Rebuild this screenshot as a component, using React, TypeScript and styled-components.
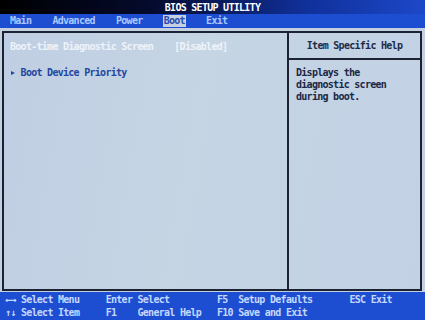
import React from "react";
import styled, { createGlobalStyle } from "styled-components";

const CH = 5.3;

const Global = createGlobalStyle`
  html, body { margin: 0; padding: 0; background: #c4d0de; }
  body { width: 425px; height: 320px; overflow: hidden; }
`;

const Screen = styled.div`
  width: 425px;
  height: 320px;
  display: flex;
  flex-direction: column;
  font-family: "DejaVu Sans Mono", "Liberation Mono", monospace;
  font-size: 10px;
  letter-spacing: -0.72px;
  font-weight: 700;
`;

const TitleBar = styled.div`
  flex: none;
  height: 14px;
  box-sizing: border-box;
  padding-top: 2px;
  line-height: 12px;
  text-align: center;
  color: #ffffff;
  background: linear-gradient(to right, #000000 0%, #040a2c 35%, #10309a 72%, #1c48c8 100%);
`;

const MenuBar = styled.div`
  flex: none;
  height: 14px;
  display: flex;
  align-items: center;
  gap: ${CH * 4}px;
  padding-left: 10px;
  background: #1d4ed2;
`;

const MenuItem = styled.span<{ $active?: boolean }>`
  line-height: 12px;
  color: ${(p) => (p.$active ? "#2a4cb0" : "#a9c8ff")};
  background: ${(p) => (p.$active ? "#c6d0e2" : "transparent")};
  padding: 0 1px;
  margin: 0 -1px;
`;

const Body = styled.div`
  flex: 1;
  display: flex;
  padding: 3px 3px 1px 2px;
  background: #c4d0df;
`;

const Frame = styled.div`
  flex: 1;
  display: grid;
  grid-template-columns: 283px 1fr;
  border: 2px solid #1b2231;
  background: linear-gradient(100deg, #bfcee2 0%, #c6d5e4 45%, #c2d1e4 100%);
`;

const LeftPanel = styled.div`
  padding: 7px 0 0 6px;
  line-height: 13px;
`;

const SettingRow = styled.div`
  display: grid;
  grid-template-columns: ${CH * 31}px auto;
  color: #eef3fa;
  height: 13px;
`;

const Spacer = styled.div`
  height: 13px;
`;

const SubMenuRow = styled.div`
  display: flex;
  align-items: center;
  height: 13px;
  color: #2347a0;
`;

const Pointer = styled.span`
  width: ${CH * 2}px;
  flex: none;
  display: flex;
  align-items: center;
  &::before {
    content: "";
    display: block;
    margin-left: 1px;
    border-left: 4px solid #2347a0;
    border-top: 2.5px solid transparent;
    border-bottom: 2.5px solid transparent;
  }
`;

const RightPanel = styled.div`
  display: flex;
  flex-direction: column;
  border-left: 2px solid #1b2231;
`;

const HelpHeader = styled.div`
  height: 25px;
  line-height: 25px;
  text-align: center;
  color: #1d2a48;
  border-bottom: 2px solid #1b2231;
`;

const HelpText = styled.div`
  padding: 7px 0 0 7px;
  line-height: 12px;
  color: #1a2846;
`;

const Footer = styled.div`
  flex: none;
  height: 28px;
  box-sizing: border-box;
  padding: 2px 0 0 5px;
  display: grid;
  grid-template-columns: ${CH * 3}px ${CH * 16}px ${CH * 6}px ${CH * 15}px ${CH * 4}px ${CH * 21}px ${CH * 4}px auto;
  grid-auto-rows: 12.6px;
  line-height: 12.6px;
  color: #c4d8ff;
  background: #1d4ed2;
  white-space: nowrap;
`;

const keys: string[][] = [
  ["←→", "Select Menu", "Enter", "Select", "F5", "Setup Defaults", "ESC", "Exit"],
  ["↑↓", "Select Item", "F1", "General Help", "F10", "Save and Exit", "", ""],
];

export default function App() {
  const menu = ["Main", "Advanced", "Power", "Boot", "Exit"];
  return (
    <>
      <Global />
      <Screen>
        <TitleBar>BIOS SETUP UTILITY</TitleBar>
        <MenuBar>
          {menu.map((m) => (
            <MenuItem key={m} $active={m === "Boot"}>
              {m}
            </MenuItem>
          ))}
        </MenuBar>
        <Body>
          <Frame>
            <LeftPanel>
              <SettingRow>
                <span>Boot-time Diagnostic Screen</span>
                <span>[Disabled]</span>
              </SettingRow>
              <Spacer />
              <SubMenuRow>
                <Pointer />
                <span>Boot Device Priority</span>
              </SubMenuRow>
            </LeftPanel>
            <RightPanel>
              <HelpHeader>Item Specific Help</HelpHeader>
              <HelpText>
                <div>Displays the</div>
                <div>diagnostic screen</div>
                <div>during boot.</div>
              </HelpText>
            </RightPanel>
          </Frame>
        </Body>
        <Footer>
          {keys.flat().map((k, i) => (
            <span key={i}>{k}</span>
          ))}
        </Footer>
      </Screen>
    </>
  );
}
